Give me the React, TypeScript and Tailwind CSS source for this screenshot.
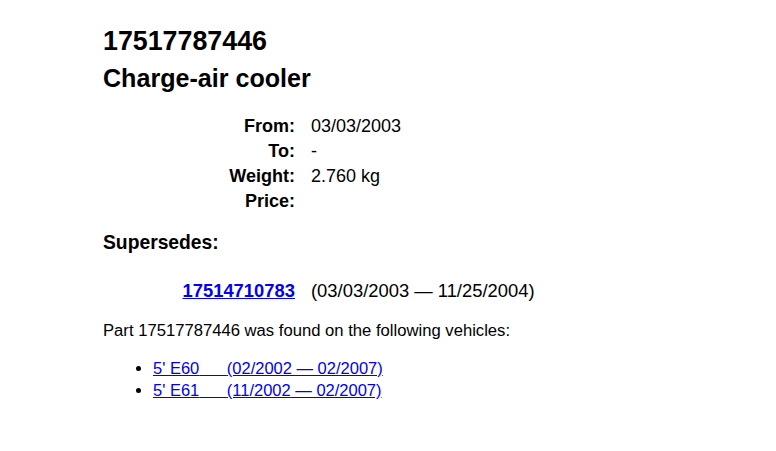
const rows = [
  { label: "From:", value: "03/03/2003" },
  { label: "To:", value: "-" },
  { label: "Weight:", value: "2.760 kg" },
  { label: "Price:", value: "" },
];

const vehicles = [
  { model: "5' E60", range: "(02/2002 — 02/2007)" },
  { model: "5' E61", range: "(11/2002 — 02/2007)" },
];

export default function App() {
  return (
    <div className="min-h-[451px] w-full bg-white pl-[103px] pt-[26px] font-['Liberation_Sans',Arial,sans-serif] text-black">
      <h1 className="text-[26.8px] leading-[30px] font-bold">17517787446</h1>
      <h2 className="mt-[8px] text-[25.1px] leading-[28px] font-bold">Charge-air cooler</h2>

      <div className="mt-[22px] grid grid-cols-[192px_auto] gap-x-[16px] text-[18px] leading-[25px]">
        {rows.map((r) => (
          <div key={r.label} className="contents">
            <div className="text-right font-bold">{r.label}</div>
            <div>{r.value}</div>
          </div>
        ))}
      </div>

      <h3 className="mt-[17px] text-[19.3px] leading-[24px] font-bold">Supersedes:</h3>

      <div className="mt-[23px] grid grid-cols-[192px_auto] gap-x-[16px] text-[18.4px] leading-[25px]">
        <div className="text-right">
          <a href="#" className="font-bold text-[#0000ee] underline">
            17514710783
          </a>
        </div>
        <div>(03/03/2003 — 11/25/2004)</div>
      </div>

      <p className="mt-[18px] text-[16.65px] leading-[20px]">
        Part 17517787446 was found on the following vehicles:
      </p>

      <ul className="mt-[16px] list-disc pl-[50px] text-[16.5px] leading-[22px]">
        {vehicles.map((v) => (
          <li key={v.model}>
            <a href="#" className="text-[#0000ee] underline">
              {v.model}
              {"\u00a0\u00a0\u00a0\u00a0\u00a0\u00a0"}
              {v.range}
            </a>
          </li>
        ))}
      </ul>
    </div>
  );
}
